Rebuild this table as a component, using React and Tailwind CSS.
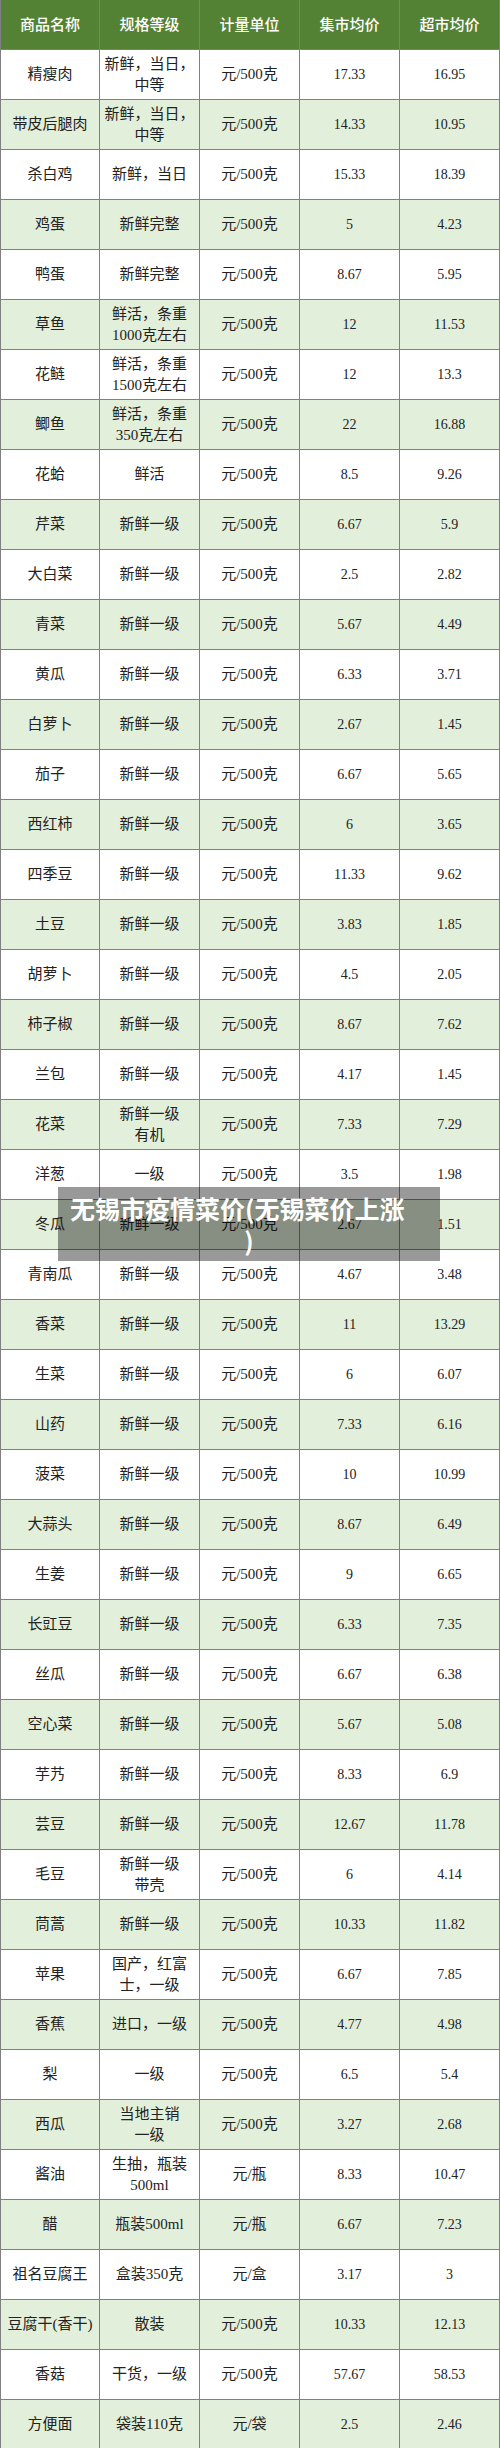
import React from 'react';

const HEADERS = ['商品名称', '规格等级', '计量单位', '集市均价', '超市均价'];

const G = '新鲜一级';
const U = '元/500克';

// [名称, 规格(可用 / 分行), 单位, 集市, 超市]
const ROWS = [
    ['精瘦肉', '新鲜，当日，/中等', U, '17.33', '16.95'],
    ['带皮后腿肉', '新鲜，当日，/中等', U, '14.33', '10.95'],
    ['杀白鸡', '新鲜，当日', U, '15.33', '18.39'],
    ['鸡蛋', '新鲜完整', U, '5', '4.23'],
    ['鸭蛋', '新鲜完整', U, '8.67', '5.95'],
    ['草鱼', '鲜活，条重/1000克左右', U, '12', '11.53'],
    ['花鲢', '鲜活，条重/1500克左右', U, '12', '13.3'],
    ['鲫鱼', '鲜活，条重/350克左右', U, '22', '16.88'],
    ['花蛤', '鲜活', U, '8.5', '9.26'],
    ['芹菜', G, U, '6.67', '5.9'],
    ['大白菜', G, U, '2.5', '2.82'],
    ['青菜', G, U, '5.67', '4.49'],
    ['黄瓜', G, U, '6.33', '3.71'],
    ['白萝卜', G, U, '2.67', '1.45'],
    ['茄子', G, U, '6.67', '5.65'],
    ['西红柿', G, U, '6', '3.65'],
    ['四季豆', G, U, '11.33', '9.62'],
    ['土豆', G, U, '3.83', '1.85'],
    ['胡萝卜', G, U, '4.5', '2.05'],
    ['柿子椒', G, U, '8.67', '7.62'],
    ['兰包', G, U, '4.17', '1.45'],
    ['花菜', '新鲜一级/有机', U, '7.33', '7.29'],
    ['洋葱', '一级', U, '3.5', '1.98'],
    ['冬瓜', G, U, '2.67', '1.51'],
    ['青南瓜', G, U, '4.67', '3.48'],
    ['香菜', G, U, '11', '13.29'],
    ['生菜', G, U, '6', '6.07'],
    ['山药', G, U, '7.33', '6.16'],
    ['菠菜', G, U, '10', '10.99'],
    ['大蒜头', G, U, '8.67', '6.49'],
    ['生姜', G, U, '9', '6.65'],
    ['长豇豆', G, U, '6.33', '7.35'],
    ['丝瓜', G, U, '6.67', '6.38'],
    ['空心菜', G, U, '5.67', '5.08'],
    ['芋艿', G, U, '8.33', '6.9'],
    ['芸豆', G, U, '12.67', '11.78'],
    ['毛豆', '新鲜一级/带壳', U, '6', '4.14'],
    ['茼蒿', G, U, '10.33', '11.82'],
    ['苹果', '国产，红富/士，一级', U, '6.67', '7.85'],
    ['香蕉', '进口，一级', U, '4.77', '4.98'],
    ['梨', '一级', U, '6.5', '5.4'],
    ['西瓜', '当地主销/一级', U, '3.27', '2.68'],
    ['酱油', '生抽，瓶装/500ml', '元/瓶', '8.33', '10.47'],
    ['醋', '瓶装500ml', '元/瓶', '6.67', '7.23'],
    ['祖名豆腐王', '盒装350克', '元/盒', '3.17', '3'],
    ['豆腐干(香干)', '散装', U, '10.33', '12.13'],
    ['香菇', '干货，一级', U, '57.67', '58.53'],
    ['方便面', '袋装110克', '元/袋', '2.5', '2.46'],
];

function Cell({ first, children, className = '' }) {
    return (
        <div
            className={`w-[100px] h-full shrink-0 flex flex-col items-center justify-center text-center border-r border-[#808080] ${first ? 'border-l' : ''} ${className}`}
        >
            {children}
        </div>
    );
}

export default function App() {
    return (
        <div className="relative w-[500px] bg-white">
            <div className="flex h-[50px] bg-[#548235] text-white text-[15px] font-medium font-['Noto_Sans_CJK_SC',sans-serif] border-b border-[#808080]">
                {HEADERS.map((h, i) => (
                    <Cell key={h} first={i === 0} className="border-[#45702b]">{h}</Cell>
                ))}
            </div>

            <div className="font-['Liberation_Serif','Noto_Sans_CJK_SC',serif] text-[#222] text-[15px] leading-[21px]">
                {ROWS.map((r, i) => (
                    <div key={r[0]} className={`flex h-[50px] border-b border-[#808080] ${i % 2 === 1 ? 'bg-[#e2efda]' : 'bg-white'}`}>
                        <Cell first>{r[0]}</Cell>
                        <Cell>
                            {r[1].split('/').map((line) => (
                                <span key={line}>{line}</span>
                            ))}
                        </Cell>
                        <Cell>{r[2]}</Cell>
                        <Cell className="text-[14px]">{r[3]}</Cell>
                        <Cell className="text-[14px]">{r[4]}</Cell>
                    </div>
                ))}
            </div>

            {/* 标题浮层 */}
            <div className="absolute left-[58px] top-[1187px] w-[382px] h-[74px] bg-black/40 py-[5px] text-white text-[25px] font-bold leading-[32px] font-['Noto_Sans_CJK_SC',sans-serif]">
                <div className="pl-3 whitespace-nowrap">无锡市疫情菜价(无锡菜价上涨</div>
                <div className="text-center">)</div>
            </div>
        </div>
    );
}
